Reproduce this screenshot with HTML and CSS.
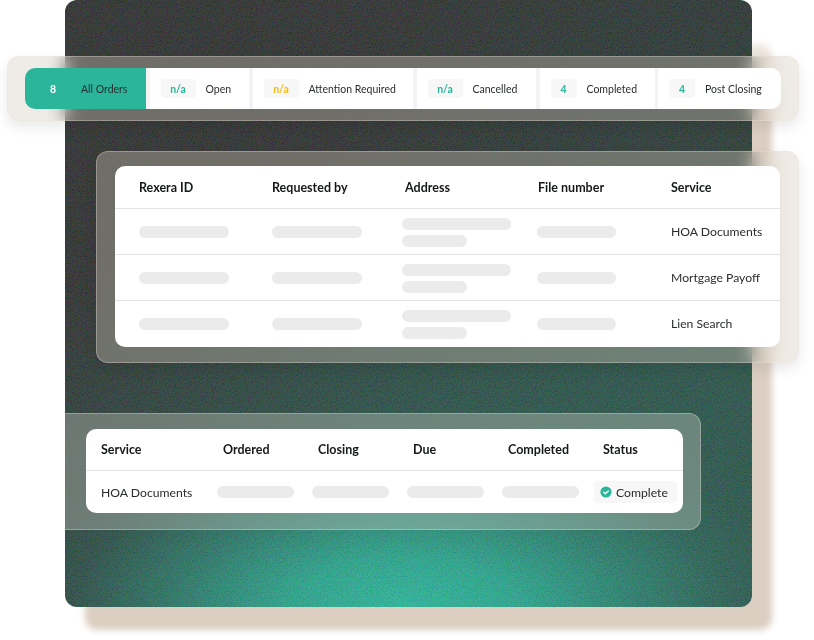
FILE: index.html
```html
<!DOCTYPE html>
<html lang="en">
<head>
<meta charset="utf-8">
<title>Orders</title>
<link rel="stylesheet" href="styles.css">
</head>
<body>
<main class="stage">
  <div class="backing"></div>
  <div class="panel">
    <svg class="noise" width="687" height="607" aria-hidden="true">
      <filter id="grain" x="0" y="0" width="100%" height="100%"><feTurbulence type="fractalNoise" baseFrequency="0.8" numOctaves="2" seed="4"/><feColorMatrix type="matrix" values="3 0 0 0 -1  0 3 0 0 -1  0 0 3 0 -1  0 0 0 0 1"/></filter>
      <rect width="687" height="607" filter="url(#grain)"/>
    </svg>
  </div>

  <section class="glass glass-tabs">
    <nav class="tabs">
      <div class="tab tab-active"><span class="badge">8</span><span>All Orders</span></div>
      <div class="tab"><span class="badge badge-wide">n/a</span><span>Open</span></div>
      <div class="tab"><span class="badge badge-wide badge-amber">n/a</span><span>Attention Required</span></div>
      <div class="tab"><span class="badge badge-wide">n/a</span><span>Cancelled</span></div>
      <div class="tab"><span class="badge">4</span><span>Completed</span></div>
      <div class="tab"><span class="badge">4</span><span>Post Closing</span></div>
    </nav>
  </section>

  <section class="glass glass-orders">
    <div class="card orders">
      <div class="row orders-row head">
        <div>Rexera ID</div><div>Requested by</div><div>Address</div><div>File number</div><div>Service</div>
      </div>
      <div class="row orders-row">
        <div><i class="bar bar-id"></i></div><div><i class="bar bar-id"></i></div>
        <div class="stack"><i class="bar bar-long"></i><i class="bar bar-short"></i></div>
        <div><i class="bar bar-file"></i></div><div>HOA Documents</div>
      </div>
      <div class="row orders-row">
        <div><i class="bar bar-id"></i></div><div><i class="bar bar-id"></i></div>
        <div class="stack"><i class="bar bar-long"></i><i class="bar bar-short"></i></div>
        <div><i class="bar bar-file"></i></div><div>Mortgage Payoff</div>
      </div>
      <div class="row orders-row">
        <div><i class="bar bar-id"></i></div><div><i class="bar bar-id"></i></div>
        <div class="stack"><i class="bar bar-long"></i><i class="bar bar-short"></i></div>
        <div><i class="bar bar-file"></i></div><div>Lien Search</div>
      </div>
    </div>
  </section>

  <section class="glass glass-service">
    <div class="card service">
      <div class="row service-row head">
        <div>Service</div><div>Ordered</div><div>Closing</div><div>Due</div><div>Completed</div><div>Status</div>
      </div>
      <div class="row service-row body">
        <div>HOA Documents</div>
        <div><i class="bar bar-date"></i></div><div><i class="bar bar-date"></i></div>
        <div><i class="bar bar-date"></i></div><div><i class="bar bar-date"></i></div>
        <div><span class="status">
          <svg width="12" height="12" viewBox="0 0 12 12" aria-hidden="true"><circle cx="6" cy="6" r="5.6" fill="#2bb59a"/><path d="M3.7 6.2 5.3 7.7 8.3 4.9" fill="none" stroke="#fff" stroke-width="1.3" stroke-linecap="round" stroke-linejoin="round"/></svg>
          Complete</span></div>
      </div>
    </div>
  </section>
</main>
</body>
</html>
```
FILE: styles.css
```css
* { box-sizing: border-box; }
html, body { margin: 0; background: #fff; }
body { font-family: "Lato", "Noto Sans", sans-serif; color: #2a2d2d; overflow: hidden; }
.stage { position: relative; width: 814px; height: 640px; overflow: hidden; }

.backing {
  position: absolute; left: 85px; top: 44px; width: 687px; height: 586px;
  border-radius: 12px; filter: blur(3px);
  background: linear-gradient(#efe8e1 0, #dccfc2 70px, #dccfc2 100%);
}
.panel {
  position: absolute; left: 65px; top: 0; width: 687px; height: 607px;
  border-radius: 12px; overflow: hidden;
  background:
    radial-gradient(ellipse 400px 175px at 49% 100%, #2bb59a 0, rgba(43,181,154,.8) 28%, rgba(43,170,145,.42) 58%, rgba(43,150,128,.12) 82%, rgba(43,140,120,0) 100%),
    radial-gradient(ellipse 620px 420px at 60% 100%, rgba(42,120,102,.8) 0, rgba(42,105,90,.5) 50%, rgba(42,85,75,0) 100%),
    radial-gradient(ellipse 480px 520px at 100% 62%, rgba(40,85,74,.7) 0, rgba(40,75,66,.35) 55%, rgba(40,60,55,0) 100%),
    #2f3231;
}
.noise { position: absolute; inset: 0; opacity: .09; }

.glass {
  position: absolute; display: flex;
  background: rgba(212,199,187,.36);
  -webkit-backdrop-filter: blur(9px);
  backdrop-filter: blur(9px);
  border: 1px solid rgba(235,230,222,.35);
  border-radius: 12px;
  box-shadow: 0 6px 14px rgba(0,0,0,.09);
}
.glass-tabs { left: 7px; top: 56px; width: 792px; height: 65px; padding: 11px 17px; }
.glass-orders { left: 96px; top: 151px; width: 703px; height: 212px; padding: 14px 18px 15px; }
.glass-service {
  left: 65px; top: 413px; width: 636px; height: 117px; padding: 15px 17px 16px 21px;
  background: rgba(215,215,205,.34);
  border-left: 0; border-radius: 0 12px 12px 0; box-shadow: none;
}

.tabs {
  flex: 1; display: flex; gap: 3.5px; background: #f3f3f3; border-radius: 10px; overflow: hidden;
  font-size: 10.5px;
}
.tab { display: flex; align-items: center; gap: 10px; padding: 0 11px; background: #fff; white-space: nowrap; }
.tab:nth-child(1) { width: 121px; padding-left: 15px; gap: 15px; background: #2bb59a; }
.tab:nth-child(2) { width: 99.5px; }
.tab:nth-child(3) { width: 160.5px; }
.tab:nth-child(4) { width: 119.5px; }
.tab:nth-child(5) { width: 115px; }
.tab:nth-child(6) { flex: 1; }
.badge {
  flex: none; width: 26px; height: 19px; display: flex; align-items: center; justify-content: center;
  border-radius: 4px; background: #f7f7f7; color: #2bb59a; font-weight: 700;
}
.badge-wide { width: 35px; }
.badge-amber { color: #f7b90f; }
.tab-active .badge { background: transparent; color: #fff; }

.card { flex: 1; background: #fff; border-radius: 10px; overflow: hidden; font-size: 12.2px; }
.row { display: grid; align-items: center; border-top: 1px solid #e4e4e4; }
.row.head { border-top: 0; font-weight: 700; font-size: 12.5px; color: #16191a; }
.orders-row { grid-template-columns: repeat(5, 133px); padding-left: 24px; height: 46px; }
.orders-row.head { height: 42px; }
.orders-row .stack { margin-left: -3px; padding-top: 2px; display: flex; flex-direction: column; gap: 5px; }
.orders-row > div:nth-child(4) .bar { margin-left: -1px; }
.service-row { grid-template-columns: 122px 95px 95px 95px 95px 1fr; padding-left: 15px; }
.service-row.head { height: 41px; }
.service-row.body { height: 43px; grid-template-columns: 116px 95px 95px 95px 92px 1fr; }

.bar { display: block; height: 12px; border-radius: 6px; background: #ebebeb; }
.bar-id { width: 89.5px; }
.bar-long { width: 109px; }
.bar-short { width: 65px; }
.bar-file { width: 79px; }
.bar-date { width: 77px; }
.status {
  display: inline-flex; align-items: center; gap: 4px; width: 83px; height: 22px; padding-left: 6px;
  background: #f7f7f7; border-radius: 4px;
}
```
